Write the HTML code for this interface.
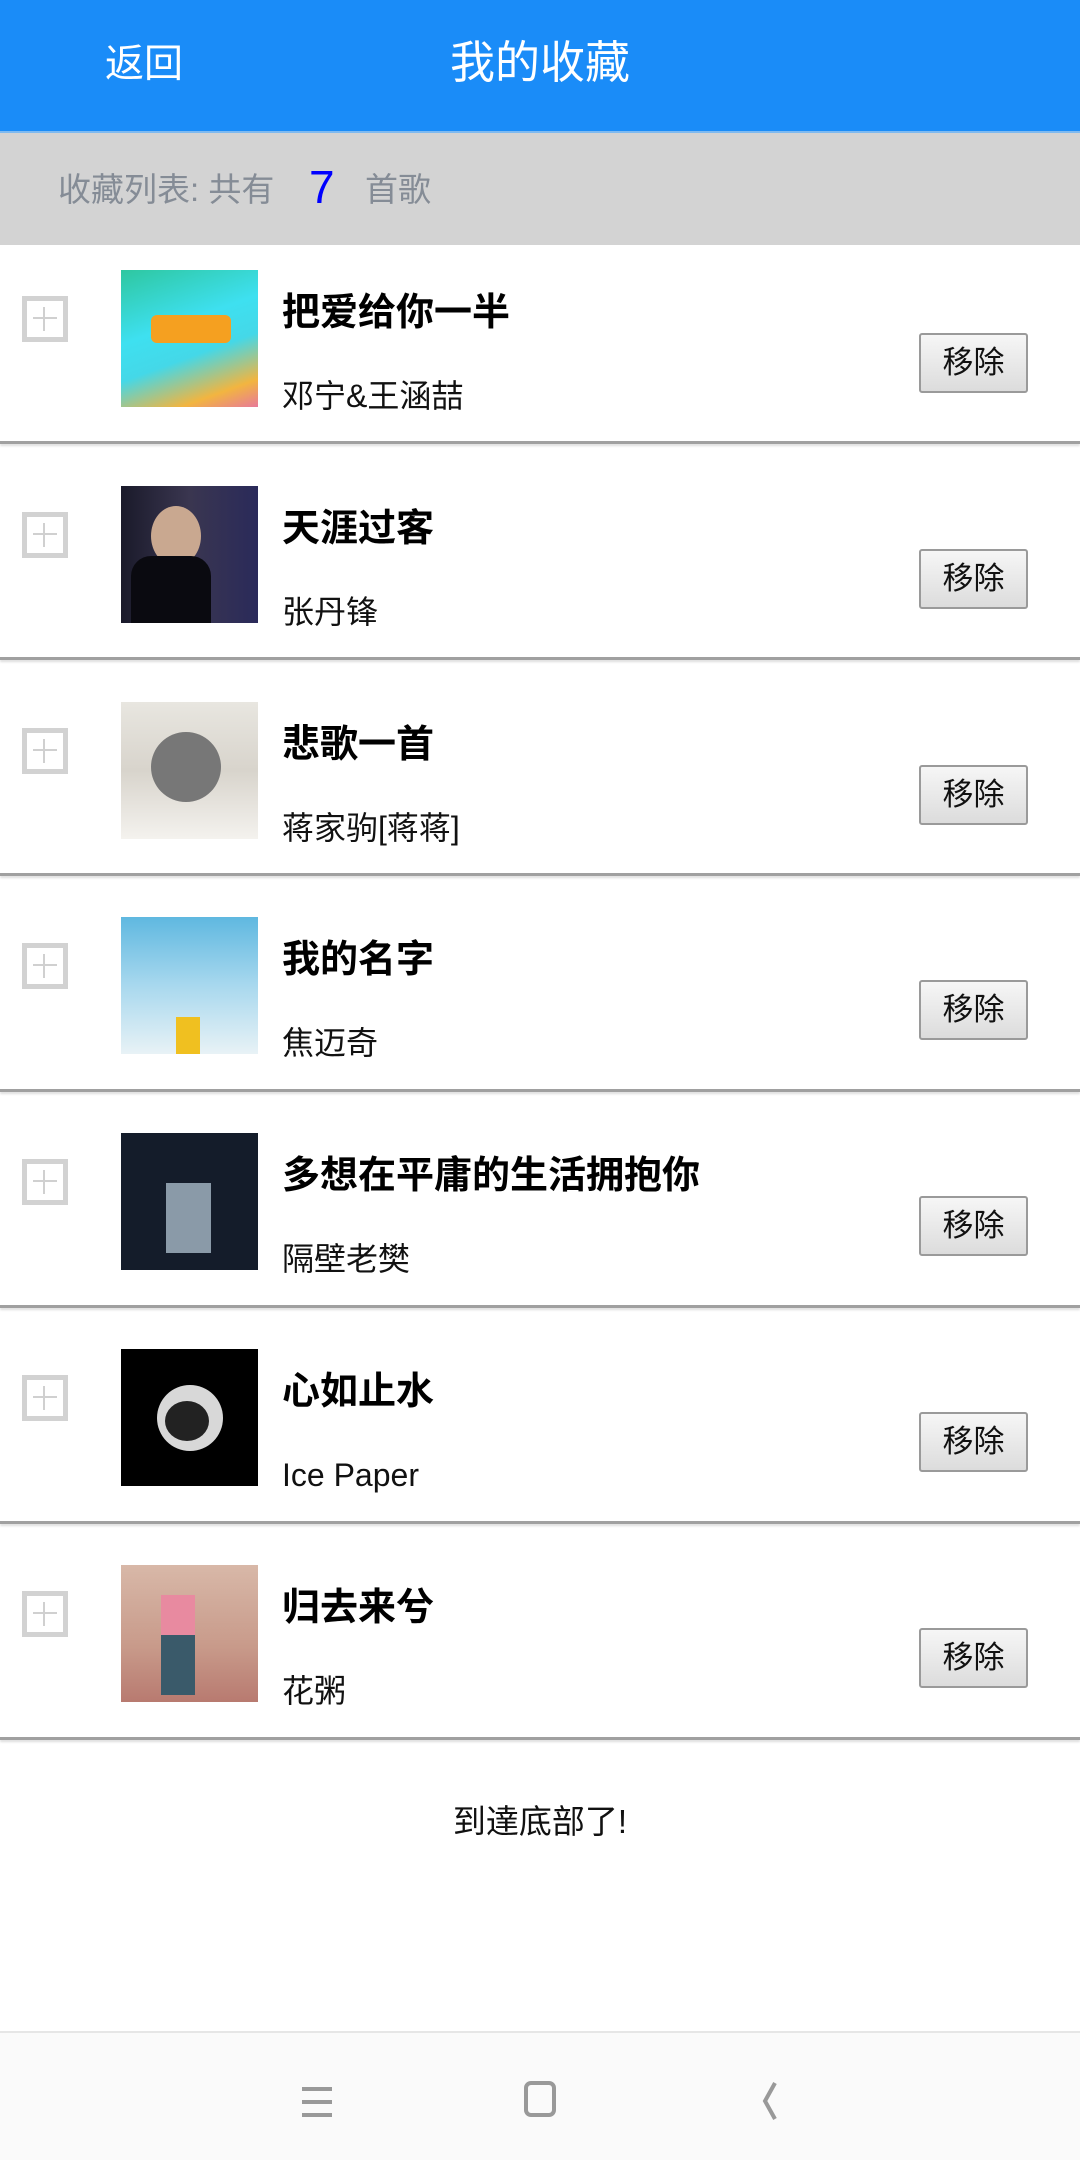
<!DOCTYPE html>
<html><head><meta charset="utf-8">
<style>
*{margin:0;padding:0;box-sizing:border-box}
body{width:1080px;height:2160px;position:relative;background:#fff;font-family:"Liberation Sans","Noto Sans CJK SC",sans-serif;overflow:hidden}
.hdr{position:absolute;left:0;top:0;width:1080px;height:131px;background:#1a8cf8;color:#fff}
.bar{position:absolute;left:0;top:131px;width:1080px;height:114px;background:#d3d3d3;border-top:2px solid #7fbaf0}
.a{position:absolute;white-space:nowrap}
.cb{position:absolute;left:22px;width:46px;height:46px;border:5px solid #d2d2d2;background:#fff}
.cb:before{content:"";position:absolute;left:16px;top:6px;width:2px;height:24px;background:#d0d0d0}
.cb:after{content:"";position:absolute;left:6px;top:16px;width:24px;height:2px;background:#d0d0d0}
.img{position:absolute;left:121px;width:137px;height:137px;overflow:hidden}
.t{position:absolute;left:282px;font-size:38px;font-weight:bold;line-height:50px;color:#000}
.s{position:absolute;left:282px;font-size:32px;line-height:44px;color:#111}
.btn{position:absolute;left:919px;width:109px;height:60px;border:2px solid #9a9a9a;border-radius:3px;background:linear-gradient(#f6f6f6,#dcdcdc);font-size:31px;line-height:56px;text-align:center;color:#111}
.sep{position:absolute;left:0;width:1080px;height:3px;background:#a0a0a0;box-shadow:0 2px 2px #ddd}
</style></head><body>
<div class="hdr">
<div class="a" style="left:105px;top:40px;font-size:39px;line-height:50px">返回</div>
<div class="a" style="left:450px;top:35px;font-size:45px;line-height:56px">我的收藏</div>
</div>
<div class="bar">
<div class="a" style="left:58px;top:35px;font-size:33px;line-height:44px;color:#858c96">收藏列表: 共有</div>
<div class="a" style="left:309px;top:26px;font-size:46px;line-height:56px;color:#0000ff">7</div>
<div class="a" style="left:365px;top:35px;font-size:33px;line-height:44px;color:#858c96">首歌</div>
</div>

<div class="cb" style="top:296px"></div>
<div class="img" style="top:270px;background:linear-gradient(160deg,#2ec7a0,#3ee0f0 40%,#44d8e8 60%,#f2b540 85%,#e87a9a)"><div style="position:absolute;left:30px;top:45px;width:80px;height:28px;background:#f5a020;border-radius:6px"></div></div>
<div class="t" style="top:288px">把爱给你一半</div>
<div class="s" style="top:374px">邓宁&amp;王涵喆</div>
<div class="btn" style="top:333px">移除</div>
<div class="sep" style="top:441px"></div>

<div class="cb" style="top:512px"></div>
<div class="img" style="top:486px;background:linear-gradient(90deg,#1a1a2a,#3a3650 50%,#2a2a5a)"><div style="position:absolute;left:30px;top:20px;width:50px;height:60px;border-radius:50%;background:#c9a890"></div><div style="position:absolute;left:10px;top:70px;width:80px;height:70px;background:#0a0a10;border-radius:20px 20px 0 0"></div></div>
<div class="t" style="top:504px">天涯过客</div>
<div class="s" style="top:590px">张丹锋</div>
<div class="btn" style="top:549px">移除</div>
<div class="sep" style="top:657px"></div>

<div class="cb" style="top:728px"></div>
<div class="img" style="top:702px;background:linear-gradient(#e8e6e0,#d8d4cc 50%,#f4f2ee)"><div style="position:absolute;left:30px;top:30px;width:70px;height:70px;border-radius:50%;background:#777"></div></div>
<div class="t" style="top:720px">悲歌一首</div>
<div class="s" style="top:806px">蒋家驹[蒋蒋]</div>
<div class="btn" style="top:765px">移除</div>
<div class="sep" style="top:873px"></div>

<div class="cb" style="top:943px"></div>
<div class="img" style="top:917px;background:linear-gradient(#5fb8e0,#a8d8ee 50%,#e8f2f6)"><div style="position:absolute;left:55px;top:100px;width:24px;height:37px;background:#f0c020"></div></div>
<div class="t" style="top:935px">我的名字</div>
<div class="s" style="top:1021px">焦迈奇</div>
<div class="btn" style="top:980px">移除</div>
<div class="sep" style="top:1089px"></div>

<div class="cb" style="top:1159px"></div>
<div class="img" style="top:1133px;background:#141c2a"><div style="position:absolute;left:45px;top:50px;width:45px;height:70px;background:#8a9aa8"></div></div>
<div class="t" style="top:1151px">多想在平庸的生活拥抱你</div>
<div class="s" style="top:1237px">隔壁老樊</div>
<div class="btn" style="top:1196px">移除</div>
<div class="sep" style="top:1305px"></div>

<div class="cb" style="top:1375px"></div>
<div class="img" style="top:1349px;background:#000"><div style="position:absolute;left:36px;top:36px;width:66px;height:66px;border-radius:50%;background:#d8d8d8"></div><div style="position:absolute;left:44px;top:52px;width:44px;height:40px;border-radius:50%;background:#222"></div></div>
<div class="t" style="top:1367px">心如止水</div>
<div class="s" style="top:1453px">Ice Paper</div>
<div class="btn" style="top:1412px">移除</div>
<div class="sep" style="top:1521px"></div>

<div class="cb" style="top:1591px"></div>
<div class="img" style="top:1565px;background:linear-gradient(#d8b8a8,#c89a8a 60%,#b87a70)"><div style="position:absolute;left:40px;top:30px;width:34px;height:100px;background:#3a5a6a;border-radius:10px 10px 0 0"></div><div style="position:absolute;left:40px;top:30px;width:34px;height:40px;background:#e88aa0"></div></div>
<div class="t" style="top:1583px">归去来兮</div>
<div class="s" style="top:1669px">花粥</div>
<div class="btn" style="top:1628px">移除</div>
<div class="sep" style="top:1737px"></div>

<div class="a" style="left:0;width:1080px;text-align:center;top:1800px;font-size:33px;line-height:44px;color:#111">到達底部了!</div>

<div style="position:absolute;left:0;top:2031px;width:1080px;height:129px;background:#fafafa;border-top:2px solid #e6e6e6"></div>
<svg style="position:absolute;left:0;top:2031px" width="1080" height="129">
<g stroke="#999" stroke-width="4" fill="none">
<path d="M302 58h30M302 71h30M302 84h30"/>
<rect x="526" y="52" width="28" height="32" rx="5"/>
<path d="M775 52l-10 18 10 18"/>
</g></svg>
</body></html>
